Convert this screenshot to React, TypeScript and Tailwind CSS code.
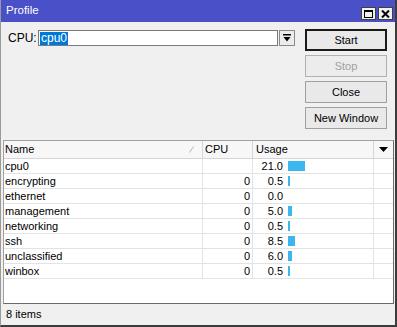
const rows = [
  { name: "cpu0", cpu: "", usage: "21.0", bar: 17 },
  { name: "encrypting", cpu: "0", usage: "0.5", bar: 2 },
  { name: "ethernet", cpu: "0", usage: "0.0", bar: 0 },
  { name: "management", cpu: "0", usage: "5.0", bar: 4 },
  { name: "networking", cpu: "0", usage: "0.5", bar: 2 },
  { name: "ssh", cpu: "0", usage: "8.5", bar: 7 },
  { name: "unclassified", cpu: "0", usage: "6.0", bar: 4 },
  { name: "winbox", cpu: "0", usage: "0.5", bar: 2 },
];

const App = () => {
  return (
    <div className="w-[397px] h-[327px] bg-[#f0f0f0] border-l border-[#9a9a9a] border-r-2 border-r-[#3c3c3c] border-b-2 border-b-[#3c3c3c] flex flex-col font-['Liberation_Sans',Arial,sans-serif] text-[11px] text-black leading-none">
      {/* title bar */}
      <div className="h-[22px] shrink-0 bg-[#4a50c8] flex items-center justify-between pl-[5px] pr-[2px]">
        <span className="text-white text-[11.5px]">Profile</span>
        <div className="flex gap-[2px] self-start mt-[7px]">
          <div className="w-[15px] h-[13px] bg-[#f0f0f0] border border-[#404040] flex items-center justify-center">
            <div className="w-[9px] h-[8px] border border-black border-t-2" />
          </div>
          <div className="w-[15px] h-[13px] bg-[#f0f0f0] border border-[#404040] flex items-center justify-center">
            <svg width="9" height="8" viewBox="0 0 9 8">
              <path d="M1 0.5 L8 7.5 M8 0.5 L1 7.5" stroke="black" strokeWidth="2" />
            </svg>
          </div>
        </div>
      </div>

      {/* top area */}
      <div className="h-[118px] shrink-0 flex">
        <div className="flex-1 flex items-start pt-[8px] pl-[7px]">
          <span className="text-[12px] leading-[16px] w-[30px]">CPU:</span>
          <div className="w-[240px] h-[16px] bg-white border border-[#7a7a7a] flex items-center pl-[1px]">
            <span className="bg-[#0078d7] text-white text-[12px] leading-[13px] px-[1px]">cpu0</span>
          </div>
          <div className="ml-[1px] w-[16px] h-[16px] bg-[#ececec] border border-[#8a8a8a] flex items-center justify-center">
            <svg width="8" height="8" viewBox="0 0 8 8">
              <rect x="0" y="0" width="8" height="1.5" fill="black" />
              <path d="M0.5 3 H7.5 L4 7.5 Z" fill="black" />
            </svg>
          </div>
        </div>
        <div className="w-[82px] mr-[8px] pt-[7px] flex flex-col gap-[4px]">
          <div className="h-[22px] border-2 border-[#1a1a1a] bg-[#e9e9e9] flex items-center justify-center text-[11px]">Start</div>
          <div className="h-[22px] border border-[#b0b0b0] bg-[#ececec] flex items-center justify-center text-[#a0a0a0]">Stop</div>
          <div className="h-[22px] border border-[#a0a0a0] bg-[#e9e9e9] flex items-center justify-center">Close</div>
          <div className="h-[22px] border border-[#a0a0a0] bg-[#e9e9e9] flex items-center justify-center">New Window</div>
        </div>
      </div>

      {/* table */}
      <div className="flex-1 ml-[2px] mr-[1px] bg-white border border-[#a0a0a0] border-r-[#6a6a6a] border-b-[#6a6a6a] flex flex-col">
        <div className="h-[18px] shrink-0 flex bg-[#f7f7f7] border-b border-[#d5d5d5]">
          <div className="w-[199px] flex items-center justify-between pl-[1px] pr-[8px] border-r border-[#d5d5d5]">
            <span>Name</span>
            <svg width="5" height="7" viewBox="0 0 5 7">
              <path d="M0.5 6.5 L4.5 0.5" stroke="#b8b8b8" strokeWidth="1" />
            </svg>
          </div>
          <div className="w-[50px] flex items-center pl-[2px] border-r border-[#d5d5d5]">CPU</div>
          <div className="w-[121px] flex items-center pl-[3px] border-r border-[#d5d5d5]">Usage</div>
          <div className="flex-1 flex items-center justify-center">
            <svg width="9" height="5" viewBox="0 0 9 5">
              <path d="M0 0 H9 L4.5 5 Z" fill="black" />
            </svg>
          </div>
        </div>
        {rows.map((r) => (
          <div key={r.name} className="h-[15px] shrink-0 flex border-b border-[#e3e3e3]">
            <div className="w-[199px] flex items-center pl-[1px] border-r border-[#e3e3e3]">{r.name}</div>
            <div className="w-[50px] flex items-center justify-end pr-[2px] border-r border-[#e3e3e3]">{r.cpu}</div>
            <div className="w-[121px] flex items-center border-r border-[#e3e3e3]">
              <span className="w-[30px] text-right">{r.usage}</span>
              {r.bar > 0 && (
                <div className="ml-[5px] h-[10px] bg-[#3cb6ef]" style={{ width: r.bar }} />
              )}
            </div>
            <div className="flex-1" />
          </div>
        ))}
      </div>

      {/* status */}
      <div className="h-[21px] shrink-0 flex items-center pl-[5px]">8 items</div>
    </div>
  );
};

export default App;
